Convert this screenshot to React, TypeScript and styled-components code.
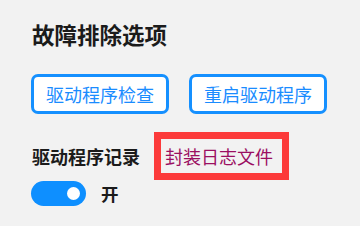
import React, { useState } from 'react';
import styled, { createGlobalStyle } from 'styled-components';

const GlobalStyle = createGlobalStyle`
  html, body {
    margin: 0;
    padding: 0;
    background: #f2f2f2;
  }
  body {
    font-family: "Noto Sans CJK SC", "Noto Sans", sans-serif;
  }
`;

const Page = styled.div`
  width: 360px;
  height: 226px;
  box-sizing: border-box;
  padding: 19px 32px 0 31px;
  background: #f2f2f2;
  overflow: hidden;
`;

const Title = styled.h2`
  margin: 0 0 0 1px;
  height: 30px;
  font-size: 22.5px;
  line-height: 30px;
  font-weight: 700;
  color: #1b1b1b;
`;

const ButtonRow = styled.div`
  display: flex;
  gap: 20px;
  margin-top: 25px;
`;

const ActionButton = styled.button`
  width: 138px;
  height: 40px;
  box-sizing: border-box;
  border: 3px solid #1590ff;
  border-radius: 7px;
  background: #ffffff;
  color: #1a8cff;
  font-family: inherit;
  font-size: 18px;
  line-height: 24px;
  padding: 0;
  cursor: pointer;
`;

const LogRow = styled.div`
  display: flex;
  align-items: center;
  gap: 14px;
  margin-top: 18px;
`;

const Label = styled.span`
  margin-left: 1px;
  font-size: 18px;
  line-height: 24px;
  font-weight: 700;
  color: #1b1b1b;
`;

const Highlight = styled.div`
  border: 7px solid #fc3a3a;
  padding: 4px 9px 4px 4px;
  box-sizing: content-box;
  display: flex;
  align-items: center;
  height: 26px;
`;

const LogLink = styled.a`
  font-size: 18px;
  line-height: 26px;
  color: #9b0f62;
  text-decoration: none;
  cursor: pointer;
`;

const ToggleRow = styled.div`
  display: flex;
  align-items: center;
  gap: 15px;
  margin-top: 1px;
`;

const Track = styled.button<{ on: boolean }>`
  position: relative;
  width: 55px;
  height: 25px;
  border: none;
  border-radius: 13px;
  padding: 0;
  background: ${p => (p.on ? '#0e8fff' : '#8a8a8a')};
  cursor: pointer;

  &::after {
    content: '';
    position: absolute;
    top: 6px;
    left: ${p => (p.on ? '36px' : '6px')};
    width: 13px;
    height: 13px;
    border-radius: 50%;
    background: #ffffff;
  }
`;

const ToggleText = styled.span`
  font-size: 17.5px;
  line-height: 24px;
  font-weight: 700;
  color: #1b1b1b;
`;

const App = () => {
  const [logging, setLogging] = useState(true);

  return (
    <>
      <GlobalStyle />
      <Page>
        <Title>故障排除选项</Title>
        <ButtonRow>
          <ActionButton>驱动程序检查</ActionButton>
          <ActionButton>重启驱动程序</ActionButton>
        </ButtonRow>
        <LogRow>
          <Label>驱动程序记录</Label>
          <Highlight>
            <LogLink>封装日志文件</LogLink>
          </Highlight>
        </LogRow>
        <ToggleRow>
          <Track on={logging} onClick={() => setLogging(!logging)} />
          <ToggleText>{logging ? '开' : '关'}</ToggleText>
        </ToggleRow>
      </Page>
    </>
  );
};

export default App;
